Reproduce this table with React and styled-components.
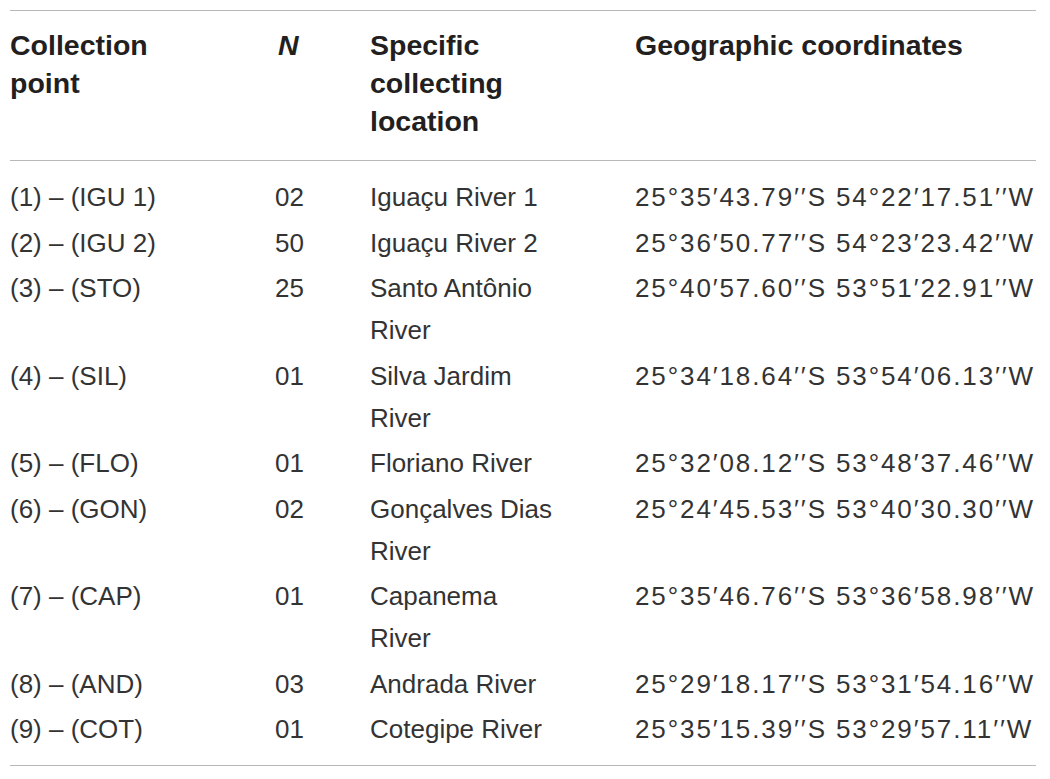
import styled, { createGlobalStyle } from "styled-components";

const rows = [
  { point: "(1) – (IGU 1)", n: "02", location: "Iguaçu River 1", coords: "25°35′43.79′′S 54°22′17.51′′W" },
  { point: "(2) – (IGU 2)", n: "50", location: "Iguaçu River 2", coords: "25°36′50.77′′S 54°23′23.42′′W" },
  { point: "(3) – (STO)", n: "25", location: "Santo Antônio River", coords: "25°40′57.60′′S 53°51′22.91′′W" },
  { point: "(4) – (SIL)", n: "01", location: "Silva Jardim River", coords: "25°34′18.64′′S 53°54′06.13′′W" },
  { point: "(5) – (FLO)", n: "01", location: "Floriano River", coords: "25°32′08.12′′S 53°48′37.46′′W" },
  { point: "(6) – (GON)", n: "02", location: "Gonçalves Dias River", coords: "25°24′45.53′′S 53°40′30.30′′W" },
  { point: "(7) – (CAP)", n: "01", location: "Capanema River", coords: "25°35′46.76′′S 53°36′58.98′′W" },
  { point: "(8) – (AND)", n: "03", location: "Andrada River", coords: "25°29′18.17′′S 53°31′54.16′′W" },
  { point: "(9) – (COT)", n: "01", location: "Cotegipe River", coords: "25°35′15.39′′S 53°29′57.11′′W" }
];

export default function App() {
  return (
    <Page>
      <GlobalStyle />
      <Table>
        <colgroup>
          <Col $w={265} />
          <Col $w={95} />
          <Col $w={265} />
          <Col />
        </colgroup>
        <thead>
          <tr>
            <Th $pad={80}>Collection point</Th>
            <Th $italic>N</Th>
            <Th $pad={77}>Specific collecting location</Th>
            <Th>Geographic coordinates</Th>
          </tr>
        </thead>
        <tbody>
          {rows.map((r) => (
            <Row key={r.point}>
              <Td $pad={80}>{r.point}</Td>
              <Td>{r.n}</Td>
              <Td $pad={77}>{r.location}</Td>
              <Td $coords>{r.coords}</Td>
            </Row>
          ))}
        </tbody>
      </Table>
    </Page>
  );
}

const GlobalStyle = createGlobalStyle`
  body {
    margin: 0;
    background: #ffffff;
  }
`;

const Page = styled.div`
  padding: 10px 14px 10px 10px;
  font-family: "Liberation Sans", Arial, sans-serif;
  color: #231f20;
`;

const Table = styled.table`
  width: 100%;
  border-collapse: collapse;
  table-layout: fixed;
  border-top: 1px solid #b8b8b8;
  border-bottom: 1px solid #b8b8b8;
`;

const Col = styled.col`
  width: ${(p) => (p.$w ? `${p.$w}px` : "auto")};
`;

const Th = styled.th`
  text-align: left;
  vertical-align: top;
  font-size: 28.5px;
  line-height: 38px;
  font-weight: 700;
  font-style: ${(p) => (p.$italic ? "italic" : "normal")};
  padding: 15px ${(p) => p.$pad || 0}px 20px ${(p) => (p.$italic ? 3 : 0)}px;
  border-bottom: 1px solid #b8b8b8;
`;

const Row = styled.tr`
  &:first-child td {
    padding-top: 15px;
  }
  &:last-child td {
    padding-bottom: 15px;
  }
`;

const Td = styled.td`
  vertical-align: top;
  font-size: 26px;
  line-height: 42px;
  font-weight: 400;
  color: #333333;
  padding: 1.75px ${(p) => p.$pad || 0}px 1.75px 0;
  white-space: ${(p) => (p.$coords ? "nowrap" : "normal")};
  letter-spacing: ${(p) => (p.$coords ? "1.9px" : "normal")};
`;
